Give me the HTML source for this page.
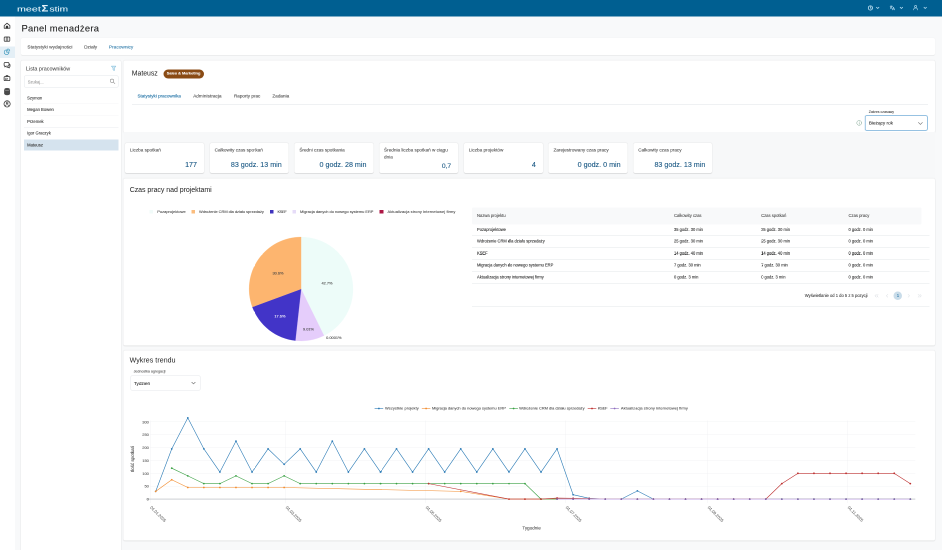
<!DOCTYPE html>
<html lang="pl"><head><meta charset="utf-8"><title>Panel menadżera</title>
<style>
*{box-sizing:border-box;margin:0;padding:0}
html{font-size:2px}
body{width:942px;height:550px;overflow:hidden;background:#f8f9fa;font-family:"Liberation Sans",sans-serif;color:#333;position:relative}
#root{will-change:transform;position:absolute;left:0;top:0;width:942rem;height:550rem;transform:scale(.5);transform-origin:0 0;background:#f8f9fa;overflow:hidden}
.abs{position:absolute}
.t{position:absolute;white-space:nowrap;line-height:1;-webkit-text-stroke:0.07rem currentColor}
svg{position:absolute;overflow:visible}
.card{position:absolute;background:#fff;border-radius:1.6rem;box-shadow:0 0.4rem 1.3rem rgba(0,0,0,.15),0 0 .3rem rgba(0,0,0,.05)}
</style></head><body><div id="root">
<div class="abs" style="left:0rem;top:0rem;width:942rem;height:16.7rem;background:#005f91"></div>
<div class="abs" style="left:0rem;top:16.7rem;width:15.2rem;height:534rem;background:#fff"></div>
<div class="abs" style="left:0rem;top:46.3rem;width:15.2rem;height:11.6rem;background:#e4eff6"></div>
<div class="t" style="left:17rem;top:5.45rem;font-size:7.0rem;color:#e4f3fb;transform-origin:0 50%;transform:scaleX(1.529)">meet</div>
<div class="t" style="left:41.6rem;top:3.56rem;font-size:9.6rem;color:#e4f3fb;font-weight:bold;transform-origin:0 50%;transform:scaleX(1.180)">Σ</div>
<div class="t" style="left:49.3rem;top:5.45rem;font-size:7.0rem;color:#e4f3fb;transform-origin:0 50%;transform:scaleX(1.450)">stim</div>
<div class="t" style="left:21.50rem;top:24.07rem;font-size:9.400rem;color:#1e1e1e;letter-spacing:0.274rem;-webkit-text-stroke:0.08rem currentColor;">Panel menadżera</div>
<div class="card" style="left:21rem;top:38.2rem;width:914rem;height:17rem;box-shadow:0 0.3rem .8rem rgba(0,0,0,.10)"></div>
<div class="t" style="left:27.40rem;top:44.44rem;font-size:4.780rem;color:#484848;">Statystyki wydajności</div>
<div class="t" style="left:84.10rem;top:44.44rem;font-size:4.780rem;color:#484848;">Działy</div>
<div class="t" style="left:108.90rem;top:44.44rem;font-size:4.780rem;color:#2a78a8;">Pracownicy</div>
<div class="card" style="left:21rem;top:60.4rem;width:100rem;height:495rem;"></div>
<div class="t" style="left:26.00rem;top:66.11rem;font-size:5.400rem;color:#333;letter-spacing:0.005rem;-webkit-text-stroke:0;">Lista pracowników</div>
<div class="abs" style="left:23.9rem;top:75.5rem;width:94.5rem;height:11.9rem;border:0.3rem solid #e3e6ea;border-radius:1.5rem;background:#fff"></div>
<div class="t" style="left:27.70rem;top:79.77rem;font-size:4.172rem;color:#9a9a9a;">Szukaj...</div>
<div class="abs" style="left:23.9rem;top:139.3rem;width:94.5rem;height:11.2rem;background:#d5e3ee"></div>
<div class="t" style="left:27.10rem;top:95.86rem;font-size:4.192rem;color:#333;">Szymon</div>
<div class="abs" style="left:23.9rem;top:103.3rem;width:94.5rem;height:0.3rem;background:#f4f5f7"></div>
<div class="t" style="left:27.10rem;top:107.46rem;font-size:4.192rem;color:#333;">Megan Bowen</div>
<div class="abs" style="left:23.9rem;top:115.14999999999999rem;width:94.5rem;height:0.3rem;background:#f4f5f7"></div>
<div class="t" style="left:27.10rem;top:119.26rem;font-size:4.192rem;color:#333;">Przemek</div>
<div class="abs" style="left:23.9rem;top:127.0rem;width:94.5rem;height:0.3rem;background:#f4f5f7"></div>
<div class="t" style="left:27.10rem;top:131.16rem;font-size:4.192rem;color:#333;">Igor Graczyk</div>
<div class="t" style="left:27.10rem;top:143.06rem;font-size:4.192rem;color:#333;">Mateusz</div>
<div class="card" style="left:123.7rem;top:60.4rem;width:811.3rem;height:72rem;"></div>
<div class="t" style="left:131.80rem;top:70.21rem;font-size:6.900rem;color:#222;letter-spacing:-0.025rem;-webkit-text-stroke:0;">Mateusz</div>
<div class="abs" style="left:163.6rem;top:69.4rem;width:40.4rem;height:9rem;border-radius:4.5rem;background:#8a4b14"></div>
<div class="t" style="left:166.80rem;top:71.71rem;font-size:3.900rem;color:#fff;font-weight:bold;">Sales &amp; Marketing</div>
<div class="t" style="left:137.50rem;top:93.98rem;font-size:4.524rem;color:#2273a6;-webkit-text-stroke:0.1rem currentColor;">Statystyki pracownika</div>
<div class="t" style="left:193.20rem;top:93.98rem;font-size:4.524rem;color:#4d4d4d;letter-spacing:0.103rem;-webkit-text-stroke:0.1rem currentColor;">Administracja</div>
<div class="t" style="left:234.00rem;top:93.98rem;font-size:4.524rem;color:#4d4d4d;letter-spacing:0.042rem;-webkit-text-stroke:0.1rem currentColor;">Raporty prac</div>
<div class="t" style="left:272.40rem;top:93.98rem;font-size:4.524rem;color:#4d4d4d;letter-spacing:0.079rem;-webkit-text-stroke:0.1rem currentColor;">Zadania</div>
<div class="abs" style="left:131.8rem;top:104.2rem;width:796rem;height:0.35rem;background:#dfe2e6"></div>
<div class="t" style="left:868.80rem;top:109.91rem;font-size:3.529rem;color:#444;">Zakres czasowy</div>
<div class="abs" style="left:865.1rem;top:115.7rem;width:62.3rem;height:14.9rem;border:0.45rem solid #5d9fce;border-radius:1.5rem;background:#fff;box-shadow:0 0 0 .5rem rgba(120,180,225,.35)"></div>
<div class="t" style="left:868.90rem;top:120.91rem;font-size:4.663rem;color:#2a2a2a;">Bieżący rok</div>
<div class="abs" style="left:123.7rem;top:131.8rem;width:811.3rem;height:46.6rem;background:#f7f8f9"></div>
<div class="card" style="left:125.1rem;top:143.2rem;width:78.8rem;height:29.8rem;box-shadow:0 0.45rem 0.9rem rgba(0,0,0,.2),0 0 .3rem rgba(0,0,0,.05)"></div>
<div class="t" style="left:129.90rem;top:146.45rem;font-size:4.647rem;line-height:7.1rem;color:#4a4a4a;white-space:nowrap">Liczba spotkań</div>
<div class="t" style="left:125.10rem;top:160.97rem;width:71.90rem;text-align:right;font-size:7.15rem;color:#1f5c87;-webkit-text-stroke:0.12rem #1f5c87">177</div>
<div class="card" style="left:209.82rem;top:143.2rem;width:78.8rem;height:29.8rem;box-shadow:0 0.45rem 0.9rem rgba(0,0,0,.2),0 0 .3rem rgba(0,0,0,.05)"></div>
<div class="t" style="left:214.62rem;top:146.45rem;font-size:4.647rem;line-height:7.1rem;color:#4a4a4a;white-space:nowrap">Całkowity czas spotkań</div>
<div class="t" style="left:209.82rem;top:160.97rem;width:71.90rem;text-align:right;font-size:7.15rem;color:#1f5c87;-webkit-text-stroke:0.12rem #1f5c87">83 godz. 13 min</div>
<div class="card" style="left:294.53999999999996rem;top:143.2rem;width:78.8rem;height:29.8rem;box-shadow:0 0.45rem 0.9rem rgba(0,0,0,.2),0 0 .3rem rgba(0,0,0,.05)"></div>
<div class="t" style="left:299.34rem;top:146.45rem;font-size:4.647rem;line-height:7.1rem;color:#4a4a4a;white-space:nowrap">Średni czas spotkania</div>
<div class="t" style="left:294.54rem;top:160.97rem;width:71.90rem;text-align:right;font-size:7.15rem;color:#1f5c87;-webkit-text-stroke:0.12rem #1f5c87">0 godz. 28 min</div>
<div class="card" style="left:379.26rem;top:143.2rem;width:78.8rem;height:29.8rem;box-shadow:0 0.45rem 0.9rem rgba(0,0,0,.2),0 0 .3rem rgba(0,0,0,.05)"></div>
<div class="t" style="left:384.06rem;top:146.45rem;font-size:4.647rem;line-height:7.1rem;color:#4a4a4a;white-space:nowrap">Średnia liczba spotkań w ciągu<br>dnia</div>
<div class="t" style="left:379.26rem;top:162.42rem;width:71.90rem;text-align:right;font-size:6.7rem;color:#1f5c87;-webkit-text-stroke:0.12rem #1f5c87">0,7</div>
<div class="card" style="left:463.98rem;top:143.2rem;width:78.8rem;height:29.8rem;box-shadow:0 0.45rem 0.9rem rgba(0,0,0,.2),0 0 .3rem rgba(0,0,0,.05)"></div>
<div class="t" style="left:468.78rem;top:146.45rem;font-size:4.647rem;line-height:7.1rem;color:#4a4a4a;white-space:nowrap">Liczba projektów</div>
<div class="t" style="left:463.98rem;top:160.97rem;width:71.90rem;text-align:right;font-size:7.15rem;color:#1f5c87;-webkit-text-stroke:0.12rem #1f5c87">4</div>
<div class="card" style="left:548.7rem;top:143.2rem;width:78.8rem;height:29.8rem;box-shadow:0 0.45rem 0.9rem rgba(0,0,0,.2),0 0 .3rem rgba(0,0,0,.05)"></div>
<div class="t" style="left:553.50rem;top:146.45rem;font-size:4.647rem;line-height:7.1rem;color:#4a4a4a;white-space:nowrap">Zarejestrowany czas pracy</div>
<div class="t" style="left:548.70rem;top:160.97rem;width:71.90rem;text-align:right;font-size:7.15rem;color:#1f5c87;-webkit-text-stroke:0.12rem #1f5c87">0 godz. 0 min</div>
<div class="card" style="left:633.42rem;top:143.2rem;width:78.8rem;height:29.8rem;box-shadow:0 0.45rem 0.9rem rgba(0,0,0,.2),0 0 .3rem rgba(0,0,0,.05)"></div>
<div class="t" style="left:638.22rem;top:146.45rem;font-size:4.647rem;line-height:7.1rem;color:#4a4a4a;white-space:nowrap">Całkowity czas pracy</div>
<div class="t" style="left:633.42rem;top:160.97rem;width:71.90rem;text-align:right;font-size:7.15rem;color:#1f5c87;-webkit-text-stroke:0.12rem #1f5c87">83 godz. 13 min</div>
<div class="card" style="left:123.7rem;top:178.4rem;width:811.3rem;height:167.2rem;"></div>
<div class="t" style="left:129.70rem;top:186.06rem;font-size:7.000rem;color:#222;letter-spacing:-0.035rem;-webkit-text-stroke:0;">Czas pracy nad projektami</div>
<div class="abs" style="left:149.29999999999998rem;top:210.1rem;width:3.6rem;height:3.6rem;background:#f1fbf9"></div>
<div class="t" style="left:157.20rem;top:209.99rem;font-size:3.950rem;color:#3c3c3c;letter-spacing:0.035rem;-webkit-text-stroke:0.06rem currentColor;">Pozaprojektowe</div>
<div class="abs" style="left:191.29999999999998rem;top:210.1rem;width:3.6rem;height:3.6rem;background:#fbbd7e"></div>
<div class="t" style="left:199.00rem;top:209.99rem;font-size:3.950rem;color:#3c3c3c;letter-spacing:-0.028rem;-webkit-text-stroke:0.06rem currentColor;">Wdrożenie CRM dla działu sprzedaży</div>
<div class="abs" style="left:269.9rem;top:210.1rem;width:3.6rem;height:3.6rem;background:#3f33bd"></div>
<div class="t" style="left:277.50rem;top:209.99rem;font-size:3.950rem;color:#3c3c3c;letter-spacing:-0.329rem;-webkit-text-stroke:0.06rem currentColor;">KSEF</div>
<div class="abs" style="left:292.5rem;top:210.1rem;width:3.6rem;height:3.6rem;background:#e6dcf8"></div>
<div class="t" style="left:300.00rem;top:209.99rem;font-size:3.950rem;color:#3c3c3c;letter-spacing:-0.019rem;-webkit-text-stroke:0.06rem currentColor;">Migracja danych do nowego systemu ERP</div>
<div class="abs" style="left:379.7rem;top:210.1rem;width:3.6rem;height:3.6rem;background:#ad1745"></div>
<div class="t" style="left:387.50rem;top:209.99rem;font-size:3.950rem;color:#3c3c3c;letter-spacing:0.079rem;-webkit-text-stroke:0.06rem currentColor;">Aktualizacja strony internetowej firmy</div>
<svg style="left:0;top:0;width:942rem;height:550rem" viewBox="0 0 942 550"><path d="M301.1,289.0 L301.10,237.00 A52,52 0 0 1 324.01,335.68 Z" fill="#edfcf9" stroke="#edfcf9" stroke-width="0.2"/><path d="M301.1,289.0 L324.01,335.68 A52,52 0 0 1 295.37,340.68 Z" fill="#e5cdfb" stroke="#e5cdfb" stroke-width="0.2"/><path d="M301.1,289.0 L295.37,340.68 A52,52 0 0 1 252.32,307.01 Z" fill="#4234c8" stroke="#4234c8" stroke-width="0.2"/><path d="M301.1,289.0 L252.32,307.01 A52,52 0 0 1 301.10,237.00 Z" fill="#fdb56f" stroke="#fdb56f" stroke-width="0.2"/></svg>
<div class="t" style="left:307rem;top:281.31rem;width:40rem;text-align:center;font-size:3.9rem;color:#444">42.7%</div>
<div class="t" style="left:258rem;top:271.51rem;width:40rem;text-align:center;font-size:3.9rem;color:#444">30.6%</div>
<div class="t" style="left:259.9rem;top:314.41rem;width:40rem;text-align:center;font-size:3.9rem;color:#fff">17.6%</div>
<div class="t" style="left:288.5rem;top:327.41rem;width:40rem;text-align:center;font-size:3.9rem;color:#444">9.01%</div>
<div class="t" style="left:313.8rem;top:335.91rem;width:40rem;text-align:center;font-size:3.9rem;color:#444">0.0001%</div>
<div class="abs" style="left:472.2rem;top:207.4rem;width:449.3rem;height:17rem;background:#f8f9fa;border-radius:1.2rem"></div>
<div class="t" style="left:477.00rem;top:213.47rem;font-size:4.164rem;color:#4a4a4a;">Nazwa projektu</div>
<div class="t" style="left:674.00rem;top:213.47rem;font-size:4.164rem;color:#4a4a4a;">Całkowity czas</div>
<div class="t" style="left:761.10rem;top:213.47rem;font-size:4.164rem;color:#4a4a4a;">Czas spotkań</div>
<div class="t" style="left:848.50rem;top:213.47rem;font-size:4.164rem;color:#4a4a4a;">Czas pracy</div>
<div class="t" style="left:477.00rem;top:227.82rem;font-size:4.067rem;color:#262626;">Pozaprojektowe</div>
<div class="t" style="left:674.00rem;top:227.82rem;font-size:4.067rem;color:#262626;">35 godz. 30 min</div>
<div class="t" style="left:761.10rem;top:227.82rem;font-size:4.067rem;color:#262626;">35 godz. 30 min</div>
<div class="t" style="left:848.50rem;top:227.82rem;font-size:4.067rem;color:#262626;">0 godz. 0 min</div>
<div class="abs" style="left:472.2rem;top:234.9rem;width:457.2rem;height:0.35rem;background:#e3e6e9"></div>
<div class="t" style="left:477.00rem;top:239.72rem;font-size:4.067rem;color:#262626;">Wdrożenie CRM dla działu sprzedaży</div>
<div class="t" style="left:674.00rem;top:239.72rem;font-size:4.067rem;color:#262626;">25 godz. 30 min</div>
<div class="t" style="left:761.10rem;top:239.72rem;font-size:4.067rem;color:#262626;">25 godz. 30 min</div>
<div class="t" style="left:848.50rem;top:239.72rem;font-size:4.067rem;color:#262626;">0 godz. 0 min</div>
<div class="abs" style="left:472.2rem;top:247rem;width:457.2rem;height:0.35rem;background:#e3e6e9"></div>
<div class="t" style="left:477.00rem;top:251.62rem;font-size:4.067rem;color:#262626;">KSEF</div>
<div class="t" style="left:674.00rem;top:251.62rem;font-size:4.067rem;color:#262626;">14 godz. 40 min</div>
<div class="t" style="left:761.10rem;top:251.62rem;font-size:4.067rem;color:#262626;">14 godz. 40 min</div>
<div class="t" style="left:848.50rem;top:251.62rem;font-size:4.067rem;color:#262626;">0 godz. 0 min</div>
<div class="abs" style="left:472.2rem;top:258.9rem;width:457.2rem;height:0.35rem;background:#e3e6e9"></div>
<div class="t" style="left:477.00rem;top:263.32rem;font-size:4.067rem;color:#262626;">Migracja danych do nowego systemu ERP</div>
<div class="t" style="left:674.00rem;top:263.32rem;font-size:4.067rem;color:#262626;">7 godz. 30 min</div>
<div class="t" style="left:761.10rem;top:263.32rem;font-size:4.067rem;color:#262626;">7 godz. 30 min</div>
<div class="t" style="left:848.50rem;top:263.32rem;font-size:4.067rem;color:#262626;">0 godz. 0 min</div>
<div class="abs" style="left:472.2rem;top:270.9rem;width:457.2rem;height:0.35rem;background:#e3e6e9"></div>
<div class="t" style="left:477.00rem;top:275.42rem;font-size:4.067rem;color:#262626;">Aktualizacja strony internetowej firmy</div>
<div class="t" style="left:674.00rem;top:275.42rem;font-size:4.067rem;color:#262626;">0 godz. 3 min</div>
<div class="t" style="left:761.10rem;top:275.42rem;font-size:4.067rem;color:#262626;">0 godz. 3 min</div>
<div class="t" style="left:848.50rem;top:275.42rem;font-size:4.067rem;color:#262626;">0 godz. 0 min</div>
<div class="abs" style="left:472.2rem;top:283rem;width:457.2rem;height:0.35rem;background:#e3e6e9"></div>
<div class="abs" style="left:472.2rem;top:306.1rem;width:457.2rem;height:0.35rem;background:#e3e6e9"></div>
<div class="t" style="left:804.80rem;top:293.79rem;font-size:4.132rem;color:#404040;-webkit-text-stroke:0.08rem currentColor;">Wyświetlanie od 1 do 5 z 5 pozycji</div>
<div class="abs" style="left:893.4rem;top:291.3rem;width:8.8rem;height:8.8rem;border-radius:50%;background:#c9dce9"></div>
<div class="t" style="left:896.70rem;top:293.50rem;font-size:4.300rem;color:#2a78a8;">1</div>
<div class="card" style="left:123.7rem;top:350.6rem;width:811.3rem;height:189.8rem;"></div>
<div class="t" style="left:129.60rem;top:356.45rem;font-size:7.000rem;color:#222;letter-spacing:0.072rem;-webkit-text-stroke:0;">Wykres trendu</div>
<div class="t" style="left:133.60rem;top:369.78rem;font-size:3.586rem;color:#555;">Jednostka agregacji</div>
<div class="abs" style="left:130.4rem;top:375.5rem;width:70.1rem;height:14.8rem;border:0.3rem solid #e4e7ea;border-radius:1.5rem;background:#fff"></div>
<div class="t" style="left:133.90rem;top:380.97rem;font-size:4.730rem;color:#2a2a2a;">Tydzień</div>
<svg style="left:0;top:0;width:942rem;height:550rem" viewBox="0 0 942 550"><line x1="150.4" x2="915.3" y1="486.22" y2="486.22" stroke="#eceef1" stroke-width="0.35"/><line x1="150.4" x2="915.3" y1="473.33" y2="473.33" stroke="#eceef1" stroke-width="0.35"/><line x1="150.4" x2="915.3" y1="460.45" y2="460.45" stroke="#eceef1" stroke-width="0.35"/><line x1="150.4" x2="915.3" y1="447.56" y2="447.56" stroke="#eceef1" stroke-width="0.35"/><line x1="150.4" x2="915.3" y1="434.68" y2="434.68" stroke="#eceef1" stroke-width="0.35"/><line x1="150.4" x2="915.3" y1="421.79" y2="421.79" stroke="#eceef1" stroke-width="0.35"/><line x1="150.40" x2="150.40" y1="420.5" y2="503" stroke="#eceef1" stroke-width="0.35"/><line x1="285.72" x2="285.72" y1="420.5" y2="503" stroke="#eceef1" stroke-width="0.35"/><line x1="425.63" x2="425.63" y1="420.5" y2="503" stroke="#eceef1" stroke-width="0.35"/><line x1="565.54" x2="565.54" y1="420.5" y2="503" stroke="#eceef1" stroke-width="0.35"/><line x1="707.74" x2="707.74" y1="420.5" y2="503" stroke="#eceef1" stroke-width="0.35"/><line x1="847.65" x2="847.65" y1="420.5" y2="503" stroke="#eceef1" stroke-width="0.35"/><line x1="146.6" x2="915.3" y1="499.1" y2="499.1" stroke="#adb2b8" stroke-width="0.6"/><polyline points="155.70,491.37 171.75,448.85 187.81,417.92 203.86,448.85 219.92,472.04 235.97,441.12 252.03,472.04 268.08,448.85 284.14,464.31 300.19,448.85 316.25,472.04 332.30,441.12 348.36,472.04 364.41,448.85 380.47,472.04 396.52,448.85 412.58,472.04 428.63,448.85 444.69,472.04 460.75,448.85 476.80,472.04 492.85,448.85 508.91,472.04 524.96,448.85 541.02,472.04 557.08,448.85 573.13,494.72 589.18,498.33 605.24,499.10 621.29,499.10 637.35,490.85 653.40,499.10 669.46,499.10 685.51,499.10 701.57,499.10 717.62,499.10 733.68,499.10 749.73,499.10 765.79,499.10 781.85,499.10 797.90,499.10 813.95,499.10 830.01,499.10 846.07,499.10 862.12,499.10 878.17,499.10 894.23,499.10 910.29,499.10" fill="none" stroke="#2a7ab5" stroke-width="0.6" stroke-linejoin="round"/><circle cx="155.70" cy="491.37" r="0.9" fill="#2a7ab5"/><circle cx="171.75" cy="448.85" r="0.9" fill="#2a7ab5"/><circle cx="187.81" cy="417.92" r="0.9" fill="#2a7ab5"/><circle cx="203.86" cy="448.85" r="0.9" fill="#2a7ab5"/><circle cx="219.92" cy="472.04" r="0.9" fill="#2a7ab5"/><circle cx="235.97" cy="441.12" r="0.9" fill="#2a7ab5"/><circle cx="252.03" cy="472.04" r="0.9" fill="#2a7ab5"/><circle cx="268.08" cy="448.85" r="0.9" fill="#2a7ab5"/><circle cx="284.14" cy="464.31" r="0.9" fill="#2a7ab5"/><circle cx="300.19" cy="448.85" r="0.9" fill="#2a7ab5"/><circle cx="316.25" cy="472.04" r="0.9" fill="#2a7ab5"/><circle cx="332.30" cy="441.12" r="0.9" fill="#2a7ab5"/><circle cx="348.36" cy="472.04" r="0.9" fill="#2a7ab5"/><circle cx="364.41" cy="448.85" r="0.9" fill="#2a7ab5"/><circle cx="380.47" cy="472.04" r="0.9" fill="#2a7ab5"/><circle cx="396.52" cy="448.85" r="0.9" fill="#2a7ab5"/><circle cx="412.58" cy="472.04" r="0.9" fill="#2a7ab5"/><circle cx="428.63" cy="448.85" r="0.9" fill="#2a7ab5"/><circle cx="444.69" cy="472.04" r="0.9" fill="#2a7ab5"/><circle cx="460.75" cy="448.85" r="0.9" fill="#2a7ab5"/><circle cx="476.80" cy="472.04" r="0.9" fill="#2a7ab5"/><circle cx="492.85" cy="448.85" r="0.9" fill="#2a7ab5"/><circle cx="508.91" cy="472.04" r="0.9" fill="#2a7ab5"/><circle cx="524.96" cy="448.85" r="0.9" fill="#2a7ab5"/><circle cx="541.02" cy="472.04" r="0.9" fill="#2a7ab5"/><circle cx="557.08" cy="448.85" r="0.9" fill="#2a7ab5"/><circle cx="573.13" cy="494.72" r="0.9" fill="#2a7ab5"/><circle cx="589.18" cy="498.33" r="0.9" fill="#2a7ab5"/><circle cx="605.24" cy="499.10" r="0.9" fill="#2a7ab5"/><circle cx="621.29" cy="499.10" r="0.9" fill="#2a7ab5"/><circle cx="637.35" cy="490.85" r="0.9" fill="#2a7ab5"/><circle cx="653.40" cy="499.10" r="0.9" fill="#2a7ab5"/><circle cx="669.46" cy="499.10" r="0.9" fill="#2a7ab5"/><circle cx="685.51" cy="499.10" r="0.9" fill="#2a7ab5"/><circle cx="701.57" cy="499.10" r="0.9" fill="#2a7ab5"/><circle cx="717.62" cy="499.10" r="0.9" fill="#2a7ab5"/><circle cx="733.68" cy="499.10" r="0.9" fill="#2a7ab5"/><circle cx="749.73" cy="499.10" r="0.9" fill="#2a7ab5"/><circle cx="765.79" cy="499.10" r="0.9" fill="#2a7ab5"/><circle cx="781.85" cy="499.10" r="0.9" fill="#2a7ab5"/><circle cx="797.90" cy="499.10" r="0.9" fill="#2a7ab5"/><circle cx="813.95" cy="499.10" r="0.9" fill="#2a7ab5"/><circle cx="830.01" cy="499.10" r="0.9" fill="#2a7ab5"/><circle cx="846.07" cy="499.10" r="0.9" fill="#2a7ab5"/><circle cx="862.12" cy="499.10" r="0.9" fill="#2a7ab5"/><circle cx="878.17" cy="499.10" r="0.9" fill="#2a7ab5"/><circle cx="894.23" cy="499.10" r="0.9" fill="#2a7ab5"/><circle cx="910.29" cy="499.10" r="0.9" fill="#2a7ab5"/><polyline points="155.70,491.37 171.75,479.77 187.81,487.50 203.86,487.50 219.92,487.50 235.97,487.50 252.03,487.50 268.08,487.50 284.14,487.50 460.75,491.37 508.91,499.10 524.96,499.10 541.02,499.10 557.08,499.10 573.13,499.10 589.18,499.10 605.24,499.10 621.29,499.10 637.35,499.10 653.40,499.10 669.46,499.10 685.51,499.10 701.57,499.10 717.62,499.10 733.68,499.10 749.73,499.10 765.79,499.10 781.85,499.10 797.90,499.10 813.95,499.10 830.01,499.10 846.07,499.10 862.12,499.10 878.17,499.10 894.23,499.10 910.29,499.10" fill="none" stroke="#f28c2e" stroke-width="0.6" stroke-linejoin="round"/><circle cx="155.70" cy="491.37" r="0.9" fill="#f28c2e"/><circle cx="171.75" cy="479.77" r="0.9" fill="#f28c2e"/><circle cx="187.81" cy="487.50" r="0.9" fill="#f28c2e"/><circle cx="203.86" cy="487.50" r="0.9" fill="#f28c2e"/><circle cx="219.92" cy="487.50" r="0.9" fill="#f28c2e"/><circle cx="235.97" cy="487.50" r="0.9" fill="#f28c2e"/><circle cx="252.03" cy="487.50" r="0.9" fill="#f28c2e"/><circle cx="268.08" cy="487.50" r="0.9" fill="#f28c2e"/><circle cx="284.14" cy="487.50" r="0.9" fill="#f28c2e"/><circle cx="460.75" cy="491.37" r="0.9" fill="#f28c2e"/><circle cx="508.91" cy="499.10" r="0.9" fill="#f28c2e"/><circle cx="524.96" cy="499.10" r="0.9" fill="#f28c2e"/><circle cx="541.02" cy="499.10" r="0.9" fill="#f28c2e"/><circle cx="557.08" cy="499.10" r="0.9" fill="#f28c2e"/><circle cx="573.13" cy="499.10" r="0.9" fill="#f28c2e"/><circle cx="589.18" cy="499.10" r="0.9" fill="#f28c2e"/><circle cx="605.24" cy="499.10" r="0.9" fill="#f28c2e"/><circle cx="621.29" cy="499.10" r="0.9" fill="#f28c2e"/><circle cx="637.35" cy="499.10" r="0.9" fill="#f28c2e"/><circle cx="653.40" cy="499.10" r="0.9" fill="#f28c2e"/><circle cx="669.46" cy="499.10" r="0.9" fill="#f28c2e"/><circle cx="685.51" cy="499.10" r="0.9" fill="#f28c2e"/><circle cx="701.57" cy="499.10" r="0.9" fill="#f28c2e"/><circle cx="717.62" cy="499.10" r="0.9" fill="#f28c2e"/><circle cx="733.68" cy="499.10" r="0.9" fill="#f28c2e"/><circle cx="749.73" cy="499.10" r="0.9" fill="#f28c2e"/><circle cx="765.79" cy="499.10" r="0.9" fill="#f28c2e"/><circle cx="781.85" cy="499.10" r="0.9" fill="#f28c2e"/><circle cx="797.90" cy="499.10" r="0.9" fill="#f28c2e"/><circle cx="813.95" cy="499.10" r="0.9" fill="#f28c2e"/><circle cx="830.01" cy="499.10" r="0.9" fill="#f28c2e"/><circle cx="846.07" cy="499.10" r="0.9" fill="#f28c2e"/><circle cx="862.12" cy="499.10" r="0.9" fill="#f28c2e"/><circle cx="878.17" cy="499.10" r="0.9" fill="#f28c2e"/><circle cx="894.23" cy="499.10" r="0.9" fill="#f28c2e"/><circle cx="910.29" cy="499.10" r="0.9" fill="#f28c2e"/><polyline points="171.75,468.18 187.81,475.91 203.86,483.64 219.92,483.64 235.97,475.91 252.03,483.64 268.08,483.64 284.14,475.91 300.19,483.64 316.25,483.64 332.30,483.64 348.36,483.64 364.41,483.64 380.47,483.64 396.52,483.64 412.58,483.64 428.63,483.64 444.69,483.64 460.75,483.64 476.80,483.64 492.85,483.64 508.91,483.64 524.96,483.64 541.02,499.10 557.08,499.10 573.13,499.10 589.18,499.10 605.24,499.10 621.29,499.10 637.35,499.10 653.40,499.10 669.46,499.10 685.51,499.10 701.57,499.10 717.62,499.10 733.68,499.10 749.73,499.10 765.79,499.10 781.85,499.10 797.90,499.10 813.95,499.10 830.01,499.10 846.07,499.10 862.12,499.10 878.17,499.10 894.23,499.10 910.29,499.10" fill="none" stroke="#3aa043" stroke-width="0.6" stroke-linejoin="round"/><circle cx="171.75" cy="468.18" r="0.9" fill="#3aa043"/><circle cx="187.81" cy="475.91" r="0.9" fill="#3aa043"/><circle cx="203.86" cy="483.64" r="0.9" fill="#3aa043"/><circle cx="219.92" cy="483.64" r="0.9" fill="#3aa043"/><circle cx="235.97" cy="475.91" r="0.9" fill="#3aa043"/><circle cx="252.03" cy="483.64" r="0.9" fill="#3aa043"/><circle cx="268.08" cy="483.64" r="0.9" fill="#3aa043"/><circle cx="284.14" cy="475.91" r="0.9" fill="#3aa043"/><circle cx="300.19" cy="483.64" r="0.9" fill="#3aa043"/><circle cx="316.25" cy="483.64" r="0.9" fill="#3aa043"/><circle cx="332.30" cy="483.64" r="0.9" fill="#3aa043"/><circle cx="348.36" cy="483.64" r="0.9" fill="#3aa043"/><circle cx="364.41" cy="483.64" r="0.9" fill="#3aa043"/><circle cx="380.47" cy="483.64" r="0.9" fill="#3aa043"/><circle cx="396.52" cy="483.64" r="0.9" fill="#3aa043"/><circle cx="412.58" cy="483.64" r="0.9" fill="#3aa043"/><circle cx="428.63" cy="483.64" r="0.9" fill="#3aa043"/><circle cx="444.69" cy="483.64" r="0.9" fill="#3aa043"/><circle cx="460.75" cy="483.64" r="0.9" fill="#3aa043"/><circle cx="476.80" cy="483.64" r="0.9" fill="#3aa043"/><circle cx="492.85" cy="483.64" r="0.9" fill="#3aa043"/><circle cx="508.91" cy="483.64" r="0.9" fill="#3aa043"/><circle cx="524.96" cy="483.64" r="0.9" fill="#3aa043"/><circle cx="541.02" cy="499.10" r="0.9" fill="#3aa043"/><circle cx="557.08" cy="499.10" r="0.9" fill="#3aa043"/><circle cx="573.13" cy="499.10" r="0.9" fill="#3aa043"/><circle cx="589.18" cy="499.10" r="0.9" fill="#3aa043"/><circle cx="605.24" cy="499.10" r="0.9" fill="#3aa043"/><circle cx="621.29" cy="499.10" r="0.9" fill="#3aa043"/><circle cx="637.35" cy="499.10" r="0.9" fill="#3aa043"/><circle cx="653.40" cy="499.10" r="0.9" fill="#3aa043"/><circle cx="669.46" cy="499.10" r="0.9" fill="#3aa043"/><circle cx="685.51" cy="499.10" r="0.9" fill="#3aa043"/><circle cx="701.57" cy="499.10" r="0.9" fill="#3aa043"/><circle cx="717.62" cy="499.10" r="0.9" fill="#3aa043"/><circle cx="733.68" cy="499.10" r="0.9" fill="#3aa043"/><circle cx="749.73" cy="499.10" r="0.9" fill="#3aa043"/><circle cx="765.79" cy="499.10" r="0.9" fill="#3aa043"/><circle cx="781.85" cy="499.10" r="0.9" fill="#3aa043"/><circle cx="797.90" cy="499.10" r="0.9" fill="#3aa043"/><circle cx="813.95" cy="499.10" r="0.9" fill="#3aa043"/><circle cx="830.01" cy="499.10" r="0.9" fill="#3aa043"/><circle cx="846.07" cy="499.10" r="0.9" fill="#3aa043"/><circle cx="862.12" cy="499.10" r="0.9" fill="#3aa043"/><circle cx="878.17" cy="499.10" r="0.9" fill="#3aa043"/><circle cx="894.23" cy="499.10" r="0.9" fill="#3aa043"/><circle cx="910.29" cy="499.10" r="0.9" fill="#3aa043"/><polyline points="428.63,483.64 508.91,499.10 524.96,499.10 541.02,499.10 557.08,498.07 573.13,498.33 589.18,498.58 605.24,499.10 621.29,499.10 637.35,499.10 653.40,499.10 669.46,499.10 685.51,499.10 701.57,499.10 717.62,499.10 733.68,499.10 749.73,499.10 765.79,499.10 781.85,483.64 797.90,473.33 813.95,473.33 830.01,473.33 846.07,473.33 862.12,473.33 878.17,473.33 894.23,473.33 910.29,483.64" fill="none" stroke="#bd3030" stroke-width="0.6" stroke-linejoin="round"/><circle cx="428.63" cy="483.64" r="0.9" fill="#bd3030"/><circle cx="508.91" cy="499.10" r="0.9" fill="#bd3030"/><circle cx="524.96" cy="499.10" r="0.9" fill="#bd3030"/><circle cx="541.02" cy="499.10" r="0.9" fill="#bd3030"/><circle cx="557.08" cy="498.07" r="0.9" fill="#bd3030"/><circle cx="573.13" cy="498.33" r="0.9" fill="#bd3030"/><circle cx="589.18" cy="498.58" r="0.9" fill="#bd3030"/><circle cx="605.24" cy="499.10" r="0.9" fill="#bd3030"/><circle cx="621.29" cy="499.10" r="0.9" fill="#bd3030"/><circle cx="637.35" cy="499.10" r="0.9" fill="#bd3030"/><circle cx="653.40" cy="499.10" r="0.9" fill="#bd3030"/><circle cx="669.46" cy="499.10" r="0.9" fill="#bd3030"/><circle cx="685.51" cy="499.10" r="0.9" fill="#bd3030"/><circle cx="701.57" cy="499.10" r="0.9" fill="#bd3030"/><circle cx="717.62" cy="499.10" r="0.9" fill="#bd3030"/><circle cx="733.68" cy="499.10" r="0.9" fill="#bd3030"/><circle cx="749.73" cy="499.10" r="0.9" fill="#bd3030"/><circle cx="765.79" cy="499.10" r="0.9" fill="#bd3030"/><circle cx="781.85" cy="483.64" r="0.9" fill="#bd3030"/><circle cx="797.90" cy="473.33" r="0.9" fill="#bd3030"/><circle cx="813.95" cy="473.33" r="0.9" fill="#bd3030"/><circle cx="830.01" cy="473.33" r="0.9" fill="#bd3030"/><circle cx="846.07" cy="473.33" r="0.9" fill="#bd3030"/><circle cx="862.12" cy="473.33" r="0.9" fill="#bd3030"/><circle cx="878.17" cy="473.33" r="0.9" fill="#bd3030"/><circle cx="894.23" cy="473.33" r="0.9" fill="#bd3030"/><circle cx="910.29" cy="483.64" r="0.9" fill="#bd3030"/><polyline points="557.08,499.10 573.13,499.10 589.18,499.10 605.24,499.10 621.29,499.10 637.35,499.10 653.40,499.10 669.46,499.10 685.51,499.10 701.57,499.10 717.62,499.10 733.68,499.10 749.73,499.10 765.79,499.10 781.85,499.10 797.90,499.10 813.95,499.10 830.01,499.10 846.07,499.10 862.12,499.10 878.17,499.10 894.23,499.10 910.29,499.10" fill="none" stroke="#cfb8ec" stroke-width="0.95" stroke-linejoin="round"/><circle cx="557.08" cy="499.10" r="0.9" fill="#8467b8"/><circle cx="573.13" cy="499.10" r="0.9" fill="#8467b8"/><circle cx="589.18" cy="499.10" r="0.9" fill="#8467b8"/><circle cx="605.24" cy="499.10" r="0.9" fill="#8467b8"/><circle cx="621.29" cy="499.10" r="0.9" fill="#8467b8"/><circle cx="637.35" cy="499.10" r="0.9" fill="#8467b8"/><circle cx="653.40" cy="499.10" r="0.9" fill="#8467b8"/><circle cx="669.46" cy="499.10" r="0.9" fill="#8467b8"/><circle cx="685.51" cy="499.10" r="0.9" fill="#8467b8"/><circle cx="701.57" cy="499.10" r="0.9" fill="#8467b8"/><circle cx="717.62" cy="499.10" r="0.9" fill="#8467b8"/><circle cx="733.68" cy="499.10" r="0.9" fill="#8467b8"/><circle cx="749.73" cy="499.10" r="0.9" fill="#8467b8"/><circle cx="765.79" cy="499.10" r="0.9" fill="#8467b8"/><circle cx="781.85" cy="499.10" r="0.9" fill="#8467b8"/><circle cx="797.90" cy="499.10" r="0.9" fill="#8467b8"/><circle cx="813.95" cy="499.10" r="0.9" fill="#8467b8"/><circle cx="830.01" cy="499.10" r="0.9" fill="#8467b8"/><circle cx="846.07" cy="499.10" r="0.9" fill="#8467b8"/><circle cx="862.12" cy="499.10" r="0.9" fill="#8467b8"/><circle cx="878.17" cy="499.10" r="0.9" fill="#8467b8"/><circle cx="894.23" cy="499.10" r="0.9" fill="#8467b8"/><circle cx="910.29" cy="499.10" r="0.9" fill="#8467b8"/><line x1="374.6" x2="383.20000000000005" y1="408.5" y2="408.5" stroke="#2a7ab5" stroke-width="0.6"/><circle cx="378.90000000000003" cy="408.5" r="0.9" fill="#2a7ab5"/><line x1="421.8" x2="430.40000000000003" y1="408.5" y2="408.5" stroke="#f28c2e" stroke-width="0.6"/><circle cx="426.1" cy="408.5" r="0.9" fill="#f28c2e"/><line x1="509.3" x2="517.9" y1="408.5" y2="408.5" stroke="#3aa043" stroke-width="0.6"/><circle cx="513.6" cy="408.5" r="0.9" fill="#3aa043"/><line x1="587.7" x2="596.3000000000001" y1="408.5" y2="408.5" stroke="#bd3030" stroke-width="0.6"/><circle cx="592.0" cy="408.5" r="0.9" fill="#bd3030"/><line x1="610.3" x2="618.9" y1="408.5" y2="408.5" stroke="#8f6fc0" stroke-width="0.6"/><circle cx="614.5999999999999" cy="408.5" r="0.9" fill="#8f6fc0"/></svg>
<div class="t" style="left:385.00rem;top:406.59rem;font-size:3.950rem;color:#3c3c3c;letter-spacing:0.061rem;-webkit-text-stroke:0.06rem currentColor;">Wszystkie projekty</div>
<div class="t" style="left:432.00rem;top:406.59rem;font-size:3.950rem;color:#3c3c3c;letter-spacing:-0.008rem;-webkit-text-stroke:0.06rem currentColor;">Migracja danych do nowego systemu ERP</div>
<div class="t" style="left:519.10rem;top:406.59rem;font-size:3.950rem;color:#3c3c3c;letter-spacing:-0.008rem;-webkit-text-stroke:0.06rem currentColor;">Wdrożenie CRM dla działu sprzedaży</div>
<div class="t" style="left:597.90rem;top:406.59rem;font-size:3.950rem;color:#3c3c3c;letter-spacing:-0.229rem;-webkit-text-stroke:0.06rem currentColor;">KSEF</div>
<div class="t" style="left:620.90rem;top:406.59rem;font-size:3.950rem;color:#3c3c3c;letter-spacing:0.056rem;-webkit-text-stroke:0.06rem currentColor;">Aktualizacja strony internetowej firmy</div>
<div class="t" style="left:118.9rem;top:497.56rem;width:30rem;text-align:right;font-size:4.0rem;color:#555">0</div>
<div class="t" style="left:118.9rem;top:484.68rem;width:30rem;text-align:right;font-size:4.0rem;color:#555">50</div>
<div class="t" style="left:118.9rem;top:471.79rem;width:30rem;text-align:right;font-size:4.0rem;color:#555">100</div>
<div class="t" style="left:118.9rem;top:458.91rem;width:30rem;text-align:right;font-size:4.0rem;color:#555">150</div>
<div class="t" style="left:118.9rem;top:446.02rem;width:30rem;text-align:right;font-size:4.0rem;color:#555">200</div>
<div class="t" style="left:118.9rem;top:433.14rem;width:30rem;text-align:right;font-size:4.0rem;color:#555">250</div>
<div class="t" style="left:118.9rem;top:420.25rem;width:30rem;text-align:right;font-size:4.0rem;color:#555">300</div>
<div class="t" style="left:150.70rem;top:505.15rem;font-size:4.1rem;color:#666;transform-origin:0 50%;transform:rotate(45deg)">01.01.2025</div>
<div class="t" style="left:286.02rem;top:505.15rem;font-size:4.1rem;color:#666;transform-origin:0 50%;transform:rotate(45deg)">01.03.2025</div>
<div class="t" style="left:425.93rem;top:505.15rem;font-size:4.1rem;color:#666;transform-origin:0 50%;transform:rotate(45deg)">01.05.2025</div>
<div class="t" style="left:565.84rem;top:505.15rem;font-size:4.1rem;color:#666;transform-origin:0 50%;transform:rotate(45deg)">01.07.2025</div>
<div class="t" style="left:708.04rem;top:505.15rem;font-size:4.1rem;color:#666;transform-origin:0 50%;transform:rotate(45deg)">01.09.2025</div>
<div class="t" style="left:847.95rem;top:505.15rem;font-size:4.1rem;color:#666;transform-origin:0 50%;transform:rotate(45deg)">01.11.2025</div>
<div class="t" style="left:522.40rem;top:525.97rem;font-size:4.533rem;color:#444;">Tygodnie</div>
<div class="t" style="left:132.6rem;top:458.9rem;font-size:4.5rem;color:#444;transform:translate(-50%,-50%) rotate(-90deg)">Ilość spotkań</div>
<svg style="left:0;top:0;width:942rem;height:550rem" viewBox="0 0 942 550" fill="none" stroke-linecap="round" stroke-linejoin="round">
<!-- rail icons -->
<g stroke="#2f2f2f" stroke-width="0.75">
<!-- home -->
<path d="M4.2,25.6 L7,23.2 L9.9,25.6 V28.3 H4.2 Z"/>
<path d="M5.9,28.3 V26.9 A1.1,1.1 0 0 1 8.1,26.9 V28.3 Z" fill="#2f2f2f" stroke-width="0.3"/>
<!-- table -->
<rect x="4.2" y="37" width="5.6" height="4.2" rx="0.6"/>
<path d="M6.2,37 V41.2 M7.8,37 V41.2" stroke-width="0.65"/>
<!-- chat -->
<path d="M4.1,63.4 A1,1 0 0 1 5.1,62.5 H8 A1,1 0 0 1 9,63.4 V65.2 A1,1 0 0 1 8,66.1 H6.1 L4.9,67 V66.1 A1,1 0 0 1 4.1,65.2 Z"/>
<path d="M9.2,64 A0.9,0.9 0 0 1 10,64.9 V66.3 A0.9,0.9 0 0 1 9.2,67.2 V68 L8.1,67.2 H6.8"/>
<!-- id badge -->
<rect x="4.1" y="76.6" width="5.8" height="4" rx="0.6"/>
<path d="M6.1,76.6 V75.6 H7.9 V76.6" />
<path d="M5.2,78.2 H6.6 M5.2,79.3 H6.6 M7.7,78.2 V79.4" stroke-width="0.55"/>
<!-- user circle -->
<circle cx="7.1" cy="103.9" r="3.1"/>
<circle cx="7.1" cy="102.9" r="0.95" stroke-width="0.6"/>
<path d="M5.1,106 A2.1,1.8 0 0 1 9.1,106" stroke-width="0.6"/>
</g>
<!-- database (filled) -->
<path d="M4.4,89.3 A2.7,1.1 0 0 1 9.8,89.3 V93.9 A2.7,1.1 0 0 1 4.4,93.9 Z" fill="#4a4a4a" stroke="#3a3a3a" stroke-width="0.4"/>
<path d="M4.4,89.4 A2.7,1.1 0 0 0 9.8,89.4" stroke="#ddd" stroke-width="0.35"/>
<!-- pie (active) -->
<g stroke="#3593b9" stroke-width="0.6">
<path d="M6.6,49.8 A2.4,2.4 0 1 0 9,52.2 H6.6 Z"/>
<path d="M7.7,48.9 A2.1,2.1 0 0 1 9.8,51 H7.7 Z"/>
</g>
<!-- header icons -->
<g stroke="#b9def2" stroke-width="0.6">
<circle cx="870.4" cy="7.95" r="2.1" stroke-width="0.8" stroke="#c6e6f6"/>
<path d="M870.4,6.6 V8.1 H871.3" stroke-width="0.7" stroke="#c6e6f6"/>
<path d="M876.5,7.3 L877.7,8.5 L878.9,7.3" stroke-width="0.75"/>
<path d="M889.7,6.2 H892.5 M891.1,5.7 V6.2 M892.1,6.2 C891.8,7.4 891,8.1 889.9,8.5 M890.4,7 C890.8,7.7 891.3,8.1 892,8.4"/>
<path d="M892.3,9.9 L893.5,7.3 L894.7,9.9 M892.7,9.1 H894.3"/>
<path d="M900.2,7.3 L901.4,8.5 L902.6,7.3" stroke-width="0.75"/>
<circle cx="915.6" cy="6.45" r="1.05"/>
<path d="M913.5,9.9 A2.1,2.0 0 0 1 917.7,9.9"/>
<path d="M924,7.3 L925.2,8.5 L926.4,7.3" stroke-width="0.75"/>
</g>
<!-- filter icon -->
<path d="M111.5,66.1 H115.9 L114.4,68.2 V70.6 L113,69.9 V68.2 Z" stroke="#62aed3" stroke-width="0.45" fill="#d6eaf4"/>
<!-- search icon -->
<g stroke="#8a8a8a" stroke-width="0.55"><circle cx="112" cy="80.8" r="1.75"/><path d="M113.3,82.1 L114.9,83.7"/></g>
<!-- select chevrons -->
<path d="M918.4,122.4 L920.4,124.4 L922.4,122.4" stroke="#666" stroke-width="0.55"/>
<path d="M191.6,382 L193.5,383.9 L195.4,382" stroke="#666" stroke-width="0.55"/>
<!-- info icon -->
<g stroke="#7fa592" stroke-width="0.5"><circle cx="859.2" cy="122.9" r="2.4"/><path d="M859.2,122.5 V124.3 M859.2,121.4 V121.5"/></g>
<!-- paginator -->
<g stroke="#cdd2d8" stroke-width="0.5">
<path d="M876.3,294.4 L875,295.8 L876.3,297.2 M878.1,294.4 L876.8,295.8 L878.1,297.2"/>
<path d="M887.7,294.4 L886.4,295.8 L887.7,297.2"/>
<path d="M908.2,294.4 L909.5,295.8 L908.2,297.2"/>
<path d="M918.2,294.4 L919.5,295.8 L918.2,297.2 M920,294.4 L921.3,295.8 L920,297.2"/>
</g>
</svg>

</div></body></html>
